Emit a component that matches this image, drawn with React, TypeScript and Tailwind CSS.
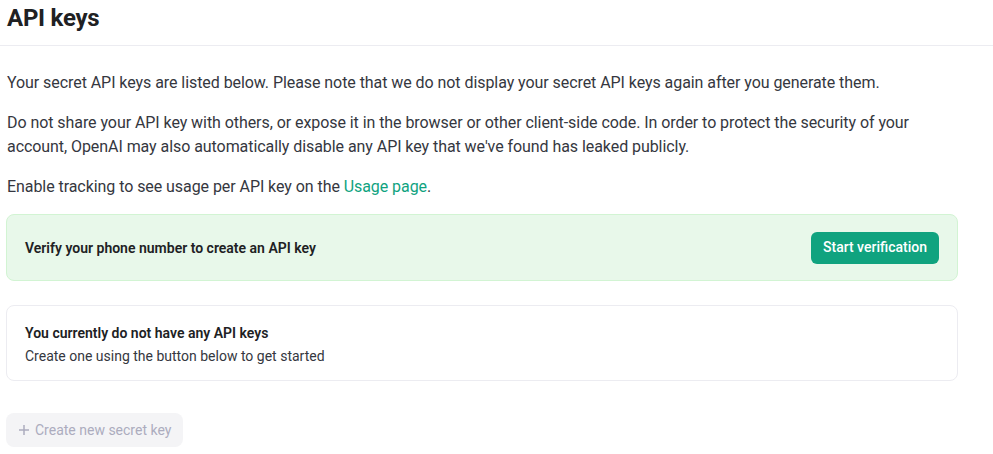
import React from "react";

export default function App() {
  return (
    <div className="w-[993px] h-[454px] bg-white overflow-hidden text-[#353740]" style={{ fontFamily: "Roboto, 'Noto Sans', sans-serif" }}>
      <div className="h-[46px] border-b border-[#ececf1] px-[7px] flex items-center">
        <h1 className="text-[24px] font-bold text-[#202123] tracking-[-0.01em] leading-none -mt-[9px]">API keys</h1>
      </div>
      <div className="px-[6px] pt-[25px]">
        <p className="text-[16px] leading-[24px] pl-[1px] tracking-[-0.004em]">
          Your secret API keys are listed below. Please note that we do not display your secret API keys again after you generate them.
        </p>
        <p className="text-[16px] leading-[24px] mt-[16px] pl-[1px] w-[930px] tracking-[-0.004em]">
          Do not share your API key with others, or expose it in the browser or other client-side code. In order to protect the security of your account, OpenAI may also automatically disable any API key that we've found has leaked publicly.
        </p>
        <p className="text-[16px] leading-[24px] mt-[16px] pl-[1px] tracking-[-0.004em]">
          Enable tracking to see usage per API key on the <span className="text-[#10a37f]">Usage page</span>.
        </p>
        <div className="mt-[15px] w-[952px] h-[67px] rounded-[8px] border border-[#d2f4d3] bg-[#e8f8ea] flex items-center justify-between pl-[18px] pr-[18px]">
          <span className="text-[14px] font-semibold text-[#202123] mt-[1px]">Verify your phone number to create an API key</span>
          <button className="h-[32px] px-[12px] rounded-[6px] bg-[#10a37f] text-white text-[14px] font-medium">Start verification</button>
        </div>
        <div className="mt-[24px] w-[952px] h-[76px] rounded-[8px] border border-[#ececf1] pl-[18px] pt-[16px]">
          <div className="text-[14px] leading-[22px] font-semibold text-[#202123]">You currently do not have any API keys</div>
          <div className="text-[14px] leading-[22px] mt-[1px]">Create one using the button below to get started</div>
        </div>
        <button className="mt-[32px] h-[34px] px-[12px] rounded-[8px] bg-[#f4f4f6] text-[#acacbe] text-[14px] flex items-center gap-[5px]">
          <svg width="12" height="12" viewBox="0 0 12 12" fill="none" stroke="currentColor" strokeWidth="1.5"><path d="M6 1v10M1 6h10" /></svg>
          Create new secret key
        </button>
      </div>
    </div>
  );
}
